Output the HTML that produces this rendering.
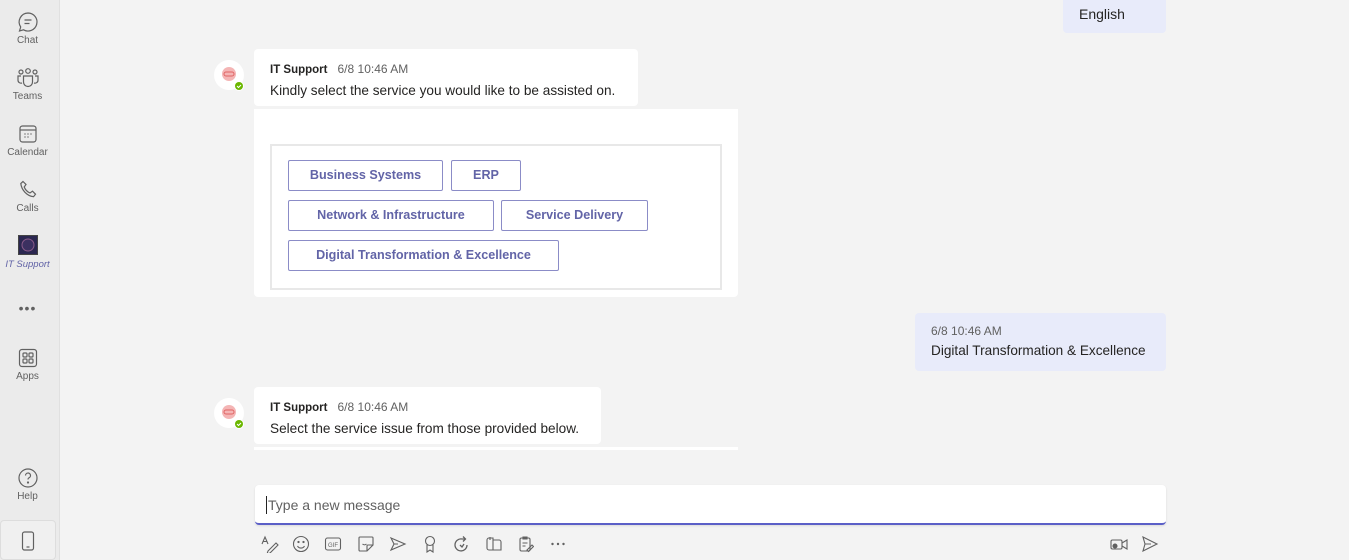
<!DOCTYPE html>
<html><head><meta charset="utf-8"><style>
*{box-sizing:border-box;margin:0;padding:0}
body{width:1349px;height:560px;overflow:hidden;background:#f3f3f3;font-family:"Liberation Sans",sans-serif;position:relative;color:#252423}
.rail{position:absolute;left:0;top:0;width:60px;height:560px;background:#ebebeb;border-right:1px solid #e0e0e0}
.ri{position:absolute;left:0;width:55px;text-align:center;font-size:10px;color:#616161;white-space:nowrap}
.ri svg{display:block;margin:0 auto 2px}
.abs{position:absolute}
.bub{position:absolute;background:#fff;border-radius:4px;white-space:nowrap}
.name{font-size:11.5px;font-weight:bold;color:#252423}
.time{font-size:12px;color:#616161;margin-left:10px}
.txt{font-size:13.6px;margin-top:5px;white-space:nowrap}
.btn{position:absolute;height:31px;border:1px solid #8b8cc7;border-radius:2px;color:#6264a7;font-size:12.6px;font-weight:bold;line-height:29px;text-align:center;background:#fff;white-space:nowrap}
.me{position:absolute;background:#e8ebfa;border-radius:4px;white-space:nowrap}
.tb svg{position:absolute;top:535px}
</style></head><body>
<div class="rail">
 <div class="ri" style="top:11px"><svg width="22" height="22" viewBox="0 0 22 22" fill="none" stroke="#616161" stroke-width="1.2"><path d="M11 2a9 9 0 1 1-4.5 16.8L2.5 20l1.2-4A9 9 0 0 1 11 2z"/><path d="M7.5 9h7M7.5 12.5h5"/></svg>Chat</div>
 <div class="ri" style="top:67px"><svg width="24" height="22" viewBox="0 0 24 22" fill="none" stroke="#616161" stroke-width="1.2"><circle cx="12" cy="4" r="2.3"/><circle cx="5" cy="5" r="2"/><circle cx="19" cy="5" r="2"/><path d="M7.5 9h9v6a4.5 4.5 0 0 1-9 0z"/><path d="M5 9H2v4a3 3 0 0 0 4 3M19 9h3v4a3 3 0 0 1-4 3"/></svg>Teams</div>
 <div class="ri" style="top:123px"><svg width="22" height="22" viewBox="0 0 22 22" fill="none" stroke="#616161" stroke-width="1.2"><rect x="3" y="3" width="16" height="16" rx="2.5"/><path d="M3 7h16"/><path d="M7.5 11h1M10.5 11h1M13.5 11h1M7.5 14h1M10.5 14h1" stroke-width="1.6"/></svg>Calendar</div>
 <div class="ri" style="top:179px"><svg width="22" height="22" viewBox="0 0 22 22" fill="none" stroke="#616161" stroke-width="1.2"><path d="M6 2.5l3 3-1.8 2.5c1 2.5 3 4.8 5.8 6l2.5-1.8 3 3-2 2.5C10 17 4.5 11 3.8 4.5z"/></svg>Calls</div>
 <div class="ri" style="top:235px;color:#6264a7;font-style:italic;font-size:9.5px"><div style="width:20px;height:20px;margin:0 auto 4px;background:#2b2750;border:1px solid #444"><svg width="18" height="18" viewBox="0 0 18 18"><circle cx="9" cy="9" r="6" fill="#3b3060" stroke="#8a5a8a"/></svg></div>IT Support</div>
 <div class="ri" style="top:300px;font-size:14px;letter-spacing:1px">•••</div>
 <div class="ri" style="top:347px"><svg width="22" height="22" viewBox="0 0 22 22" fill="none" stroke="#616161" stroke-width="1.2"><rect x="2.5" y="2.5" width="17" height="17" rx="2.5"/><rect x="6" y="6" width="4" height="4" rx="1"/><rect x="12" y="6" width="4" height="4" rx="1"/><rect x="6" y="12" width="4" height="4" rx="1"/><rect x="12" y="12" width="4" height="4" rx="1"/></svg>Apps</div>
 <div class="ri" style="top:467px"><svg width="22" height="22" viewBox="0 0 22 22" fill="none" stroke="#616161" stroke-width="1.2"><circle cx="11" cy="11" r="9"/><path d="M8.5 8.5a2.5 2.5 0 1 1 3.3 2.4c-.6.3-.8.8-.8 1.6"/><circle cx="11" cy="15.5" r=".5" fill="#616161"/></svg>Help</div>
 <div style="position:absolute;left:0;top:520px;width:56px;height:40px;border:1px solid #ddd;border-radius:4px;background:#f0f0f0"><svg style="position:absolute;left:20px;top:10px" width="14" height="20" viewBox="0 0 14 20" fill="none" stroke="#616161" stroke-width="1.2"><rect x="1.5" y="1" width="11" height="18" rx="2"/><path d="M5.5 16h3"/></svg></div>
</div>

<div class="me" style="left:1063px;top:0;width:103px;height:33px;border-radius:0 0 4px 4px"><div style="position:absolute;left:16px;top:6px;font-size:14px">English</div></div>

<svg class="abs" style="left:213px;top:59px" width="34" height="34" viewBox="0 0 34 34"><circle cx="16" cy="16" r="15" fill="#fff"/><circle cx="16" cy="15" r="7" fill="#f4b5b5"/><rect x="11" y="13" width="10" height="4" rx="2" fill="none" stroke="#e06464"/><circle cx="26" cy="27" r="5" fill="#fff"/><circle cx="26" cy="27" r="4" fill="#6bb700"/><path d="M24 27l1.5 1.5 2.5-2.5" stroke="#fff" fill="none"/></svg>
<div class="bub" style="left:254px;top:49px;width:384px;height:57px;padding:11px 16px"><span class="name">IT Support</span><span class="time">6/8 10:46 AM</span><div class="txt">Kindly select the service you would like to be assisted on.</div></div>
<div class="bub" style="left:254px;top:109px;width:484px;height:188px;border-radius:0 0 4px 4px">
 <div style="position:absolute;left:16px;top:35px;width:452px;height:146px;border:2px solid #e8e8e8"></div>
</div>
<div class="btn" style="left:288px;top:160px;width:155px">Business Systems</div>
<div class="btn" style="left:451px;top:160px;width:70px">ERP</div>
<div class="btn" style="left:288px;top:200px;width:206px">Network &amp; Infrastructure</div>
<div class="btn" style="left:501px;top:200px;width:147px">Service Delivery</div>
<div class="btn" style="left:288px;top:240px;width:271px">Digital Transformation &amp; Excellence</div>

<div class="me" style="left:915px;top:313px;width:251px;height:58px;padding:11px 16px"><div style="font-size:12px;color:#616161">6/8 10:46 AM</div><div class="txt">Digital Transformation &amp; Excellence</div></div>

<svg class="abs" style="left:213px;top:397px" width="34" height="34" viewBox="0 0 34 34"><circle cx="16" cy="16" r="15" fill="#fff"/><circle cx="16" cy="15" r="7" fill="#f4b5b5"/><rect x="11" y="13" width="10" height="4" rx="2" fill="none" stroke="#e06464"/><circle cx="26" cy="27" r="5" fill="#fff"/><circle cx="26" cy="27" r="4" fill="#6bb700"/><path d="M24 27l1.5 1.5 2.5-2.5" stroke="#fff" fill="none"/></svg>
<div class="bub" style="left:254px;top:387px;width:347px;height:57px;padding:11px 16px"><span class="name">IT Support</span><span class="time">6/8 10:46 AM</span><div class="txt">Select the service issue from those provided below.</div></div>
<div class="abs" style="left:254px;top:447px;width:484px;height:3px;background:#fff"></div>

<div class="abs" style="left:255px;top:485px;width:911px;height:40px;background:#fff;border-radius:4px;border-bottom:2px solid #5b5fc7;box-shadow:0 1px 2px rgba(0,0,0,.1)">
 <div style="position:absolute;left:11px;top:11px;width:1px;height:18px;background:#222"></div>
 <div style="position:absolute;left:13px;top:12px;font-size:14px;color:#616161">Type a new message</div>
</div>
<div class="tb">
<svg style="left:260px" width="20" height="18" viewBox="0 0 20 18" fill="none" stroke="#616161" stroke-width="1.1"><path d="M2 9l3-7 3 7M3 6.5h4"/><path d="M8 16l8-8 2 2-8 8-3 1z"/></svg>
<svg style="left:292px" width="18" height="18" viewBox="0 0 18 18" fill="none" stroke="#616161" stroke-width="1.1"><circle cx="9" cy="9" r="7.5"/><circle cx="6.5" cy="7" r=".6" fill="#616161"/><circle cx="11.5" cy="7" r=".6" fill="#616161"/><path d="M5.5 11a4 4 0 0 0 7 0"/></svg>
<svg style="left:324px" width="18" height="18" viewBox="0 0 18 18" fill="none" stroke="#616161" stroke-width="1.1"><rect x="1.5" y="3" width="15" height="12" rx="2"/><text x="9" y="12" font-size="6" text-anchor="middle" fill="#616161" stroke="none" font-family="Liberation Sans">GIF</text></svg>
<svg style="left:357px" width="18" height="18" viewBox="0 0 18 18" fill="none" stroke="#616161" stroke-width="1.1"><path d="M3 2h12a1 1 0 0 1 1 1v7l-6 6H3a1 1 0 0 1-1-1V3a1 1 0 0 1 1-1zM10 16v-5a1 1 0 0 1 1-1h5"/><path d="M5.5 9a3 3 0 0 0 4 0"/></svg>
<svg style="left:389px" width="18" height="18" viewBox="0 0 18 18" fill="none" stroke="#616161" stroke-width="1.1"><path d="M2 3l14 6-14 6 3-6z M5 9h4"/></svg>
<svg style="left:422px" width="16" height="18" viewBox="0 0 16 18" fill="none" stroke="#616161" stroke-width="1.1"><circle cx="8" cy="6" r="4.5"/><path d="M5 10v7l3-2 3 2v-7"/></svg>
<svg style="left:453px" width="18" height="18" viewBox="0 0 18 18" fill="none" stroke="#616161" stroke-width="1.3"><path d="M14 10a6 6 0 1 1-5-6h3M10 1.5l2.5 2.5L10 6.5"/><path d="M7 10l2 2 2-3"/></svg>
<svg style="left:485px" width="18" height="18" viewBox="0 0 18 18" fill="none" stroke="#616161" stroke-width="1.1"><path d="M4 3h4v12H4a2 2 0 0 1-2-2V5a2 2 0 0 1 2-2zM8 5h6a2 2 0 0 1 2 2v8H8M5 2v3"/></svg>
<svg style="left:518px" width="16" height="18" viewBox="0 0 16 18" fill="none" stroke="#616161" stroke-width="1.1"><rect x="2" y="3" width="10" height="13" rx="1.5"/><path d="M5 2h4v2H5zM4.5 8h5M4.5 11h3"/><path d="M9 15l5-5 1.5 1.5-5 5z"/></svg>
<svg style="left:550px" width="16" height="18" viewBox="0 0 16 18" fill="#616161"><circle cx="2.5" cy="9" r="1.2"/><circle cx="8" cy="9" r="1.2"/><circle cx="13.5" cy="9" r="1.2"/></svg>
<svg style="left:1109px" width="20" height="18" viewBox="0 0 20 18" fill="none" stroke="#616161" stroke-width="1.1"><rect x="2" y="5" width="11" height="9" rx="1.5"/><path d="M13 8l5-3v9l-5-3"/><circle cx="6" cy="11" r="2" fill="#616161"/></svg>
<svg style="left:1141px" width="18" height="18" viewBox="0 0 18 18" fill="none" stroke="#616161" stroke-width="1.1"><path d="M2 2l14 7-14 7 2-7zM4 9h6"/></svg>
</div>
</body></html>
